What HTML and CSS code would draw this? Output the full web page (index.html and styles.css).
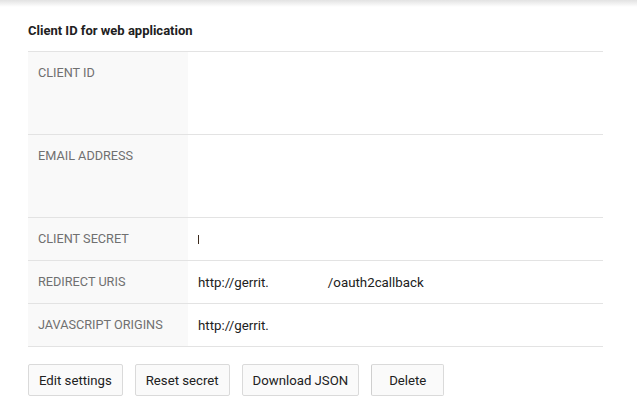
FILE: index.html
```html
<!DOCTYPE html>
<html>
<head>
<meta charset="utf-8">
<link rel="stylesheet" href="styles.css">
</head>
<body>
<div class="topshade"></div>
<main class="panel">
  <h2 class="title">Client ID for web application</h2>
  <div class="table">
    <div class="row tall">
      <div class="label">Client ID</div>
      <div class="value"></div>
    </div>
    <div class="row tall">
      <div class="label">Email address</div>
      <div class="value"></div>
    </div>
    <div class="row">
      <div class="label">Client secret</div>
      <div class="value"><span class="caret"></span></div>
    </div>
    <div class="row">
      <div class="label">Redirect URIs</div>
      <div class="value">http://gerrit.<span class="gap"></span>/oauth2callback</div>
    </div>
    <div class="row">
      <div class="label">JavaScript origins</div>
      <div class="value">http://gerrit.</div>
    </div>
  </div>
  <div class="actions">
    <button class="btn">Edit settings</button>
    <button class="btn">Reset secret</button>
    <button class="btn">Download JSON</button>
    <button class="btn btn-delete">Delete</button>
  </div>
</main>
</body>
</html>
```
FILE: styles.css
```css
html, body {
  margin: 0;
  padding: 0;
  background: #ffffff;
  font-family: Roboto, "Liberation Sans", Arial, sans-serif;
}
.topshade {
  height: 7px;
  background: linear-gradient(to bottom, #e2e2e2, #ffffff);
}
.panel {
  padding: 0 34px 0 28px;
}
.title {
  margin: 15px 0 0 0;
  font-size: 13px;
  line-height: 17px;
  font-weight: 700;
  color: #212121;
}
.table {
  margin-top: 12px;
  border-top: 1px solid #e3e3e3;
}
.row {
  display: flex;
  border-bottom: 1px solid #e3e3e3;
  min-height: 42px;
}
.row.tall {
  min-height: 82px;
}
.label {
  width: 150px;
  flex: none;
  padding: 13px 0 0 10px;
  background: #f9f9f9;
  color: #707070;
  font-size: 12.7px;
  line-height: 16px;
  text-transform: uppercase;
}
.value {
  flex: 1;
  padding: 14px 0 0 10px;
  color: #212121;
  font-size: 13.3px;
  line-height: 16px;
}
.caret {
  display: inline-block;
  width: 1px;
  height: 9px;
  margin-top: 3px;
  background: #3b2a1c;
  vertical-align: top;
}
.gap {
  display: inline-block;
  width: 59px;
}
.actions {
  display: flex;
  gap: 12px;
  margin-top: 17px;
}
.btn {
  height: 32px;
  padding: 0 10px;
  border: 1px solid #dadada;
  border-radius: 2px;
  background: #fafafa;
  color: #212121;
  font-family: Roboto, "Liberation Sans", Arial, sans-serif;
  font-size: 13.2px;
}
.btn-delete {
  padding: 0 17px;
  border-left-color: #cfcfcf;
}
```
